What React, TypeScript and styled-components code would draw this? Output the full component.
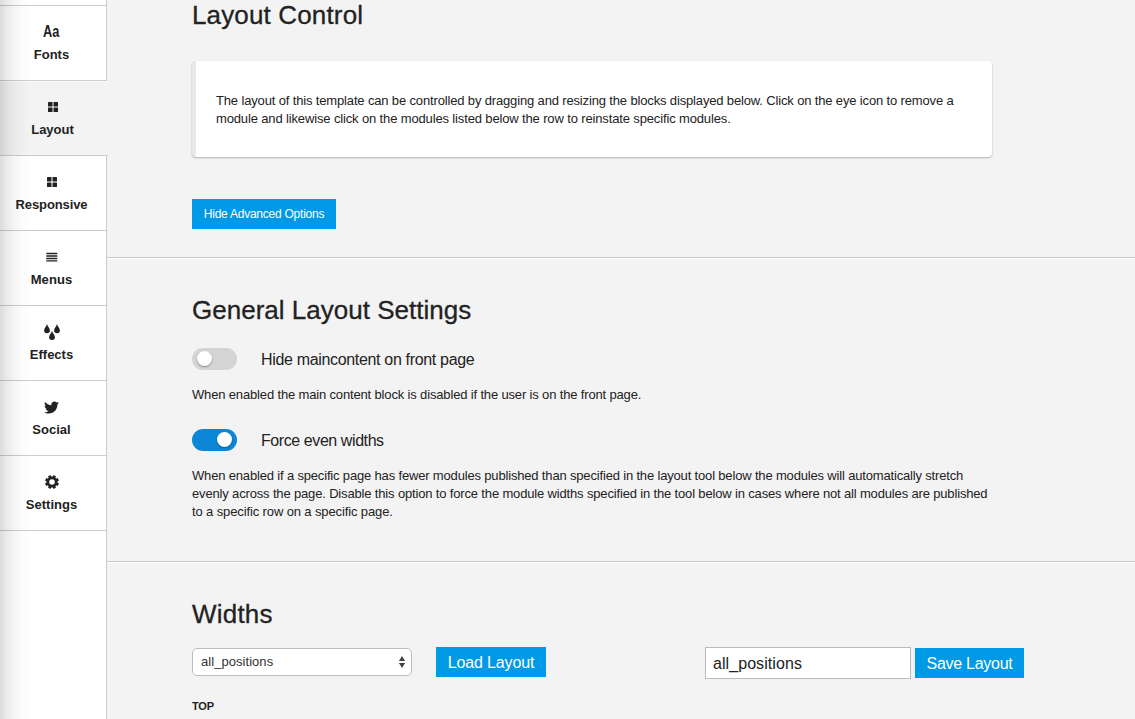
import React from 'react';
import styled, { createGlobalStyle } from 'styled-components';
import { FaTwitter } from 'react-icons/fa';

const GlobalStyle = createGlobalStyle`
  * { box-sizing: border-box; }
  body {
    margin: 0;
    background: #f3f3f3;
    color: #222;
    font: 13px/18px "Liberation Sans", Arial, sans-serif;
    overflow: hidden;
  }
  h2, p { margin: 0; font-weight: normal; }
`;

const Page = styled.div`
  display: flex;
  height: 719px;
  overflow: hidden;
`;

/* Sidebar */

const Sidebar = styled.nav`
  flex: none;
  width: 107px;
  display: flex;
  flex-direction: column;
  position: relative;
  z-index: 1;
  background: #fff;

  &::after {
    content: '';
    position: absolute;
    inset: 0 auto 0 0;
    width: 30px;
    pointer-events: none;
    background: linear-gradient(to right, rgba(0, 0, 0, 0.14), rgba(0, 0, 0, 0.085) 20%, rgba(0, 0, 0, 0.045) 45%, rgba(0, 0, 0, 0.015) 75%, transparent);
  }
`;

const SidebarTop = styled.div`
  height: 6px;
  flex: none;
  border-right: 1px solid #ccc;
  border-bottom: 1px solid #ccc;
`;

const NavItem = styled.a<{ $active?: boolean }>`
  flex: none;
  width: ${p => (p.$active ? 108 : 107)}px;
  height: 75px;
  display: flex;
  flex-direction: column;
  align-items: center;
  padding: 16px 3px 0 0;
  border-right: ${p => (p.$active ? 0 : 1)}px solid #ccc;
  border-bottom: 1px solid #ccc;
  background: ${p => (p.$active ? '#f3f3f3' : '#fff')};
  box-shadow: ${p => (p.$active ? 'inset 0 1px #fbfbfb' : 'none')};
`;

const IconSlot = styled.span`
  width: 20px;
  height: 20px;
  display: flex;
  align-items: center;
  justify-content: center;
`;

const NavLabel = styled.span<{ $spacing?: number }>`
  margin-top: 4px;
  font-weight: bold;
  line-height: 18px;
  letter-spacing: ${p => p.$spacing ?? 0}px;
`;

const FontGlyph = styled.span`
  font: bold 16px/20px "Liberation Sans", Arial, sans-serif;
  transform: scaleX(0.8);
`;

const SidebarRest = styled.div`
  flex: 1;
  border-right: 1px solid #ccc;
`;

/* Content */

const Content = styled.main`
  flex: 1;
  min-width: 0;
`;

const Section = styled.section<{ $height: number; $top: number; $first?: boolean }>`
  height: ${p => p.$height}px;
  padding: ${p => p.$top}px 0 0 85px;
  border-top: ${p => (p.$first ? 0 : 1)}px solid #fff;
  border-bottom: 1px solid #ccc;
`;

const Title = styled.h2<{ $spacing: number }>`
  height: 30px;
  font-size: 26px;
  line-height: 30px;
  letter-spacing: ${p => p.$spacing}px;
  -webkit-text-stroke: 0.3px #222;
`;

const Card = styled.div`
  width: 800px;
  height: 96px;
  margin-top: 31px;
  padding: 31px 20px 29px;
  background: #fff;
  border-left: 4px solid #e8e8e8;
  border-radius: 4px;
  box-shadow: 0 1px 2px rgba(0, 0, 0, 0.28);
`;

const Text = styled.p<{ $spacing?: number }>`
  white-space: nowrap;
  letter-spacing: ${p => p.$spacing ?? -0.155}px;
`;

const Button = styled.button<{ $width: number; $size?: number; $spacing: number; $drop?: number }>`
  display: block;
  width: ${p => p.$width}px;
  height: 30px;
  padding: ${p => p.$drop ?? 0}px 0 0;
  border: 0;
  background: #0099e5;
  color: #fff;
  font: ${p => p.$size ?? 16}px/30px "Liberation Sans", Arial, sans-serif;
  letter-spacing: ${p => p.$spacing}px;
  white-space: nowrap;
`;

const Advanced = styled.div`
  margin-top: 42px;
`;

const Option = styled.div<{ $gap: number }>`
  display: flex;
  align-items: flex-start;
  height: 22px;
  margin: ${p => p.$gap}px 0 16px;
`;

const Switch = styled.span<{ $on?: boolean }>`
  width: 45px;
  height: 22px;
  display: flex;
  justify-content: ${p => (p.$on ? 'flex-end' : 'flex-start')};
  padding: 3px 5px 0;
  border-radius: 11px;
  background: ${p => (p.$on ? '#0c87d8' : '#d4d4d4')};

  &::before {
    content: '';
    width: 15px;
    height: 15px;
    border-radius: 50%;
    background: #fff;
    box-shadow: 0 1px 2px rgba(0, 0, 0, 0.35);
  }
`;

const OptionLabel = styled.span<{ $spacing: number }>`
  margin-left: 24px;
  font-size: 16px;
  line-height: 24px;
  letter-spacing: ${p => p.$spacing}px;
`;

const Toolbar = styled.div`
  display: flex;
  align-items: flex-start;
  height: 32px;
  margin-top: 18px;
`;

const Select = styled.div`
  width: 220px;
  height: 28px;
  margin: 1px 24px 0 0;
  padding: 0 5px 0 8px;
  display: flex;
  align-items: center;
  justify-content: space-between;
  border: 1px solid #bcbcbc;
  border-radius: 5px;
  background: #fff;
  color: #333;
  letter-spacing: 0.05px;
`;

const SaveGroup = styled.div`
  display: flex;
  align-items: center;
  gap: 4px;
  margin-left: 159px;
`;

const NameInput = styled.input`
  width: 206px;
  height: 32px;
  padding: 1px 7px 0;
  border: 1px solid #bcbcbc;
  border-radius: 0;
  outline: 0;
  color: #222;
  font: 16px "Liberation Sans", Arial, sans-serif;
  letter-spacing: 0.07px;
`;

const RowName = styled.div`
  margin-top: 18px;
  font-size: 11px;
  font-weight: bold;
  letter-spacing: -0.2px;
`;

const GridIcon = () => (
  <svg width="10" height="10" viewBox="0 0 10 10" fill="#222">
    <rect width="4.5" height="4.5" rx="0.6" />
    <rect x="5.5" width="4.5" height="4.5" rx="0.6" />
    <rect y="5.5" width="4.5" height="4.5" rx="0.6" />
    <rect x="5.5" y="5.5" width="4.5" height="4.5" rx="0.6" />
  </svg>
);

const MenuIcon = () => (
  <svg width="12" height="10" viewBox="0 0 12 10" fill="#222">
    <path d="M.3 .8h11v1.5H.3zM.3 3.3h11v1.5H.3zM.3 5.8h11v1.5H.3zM.3 8.3h11v1.3H.3z" />
  </svg>
);

const DropsIcon = () => (
  <svg width="16" height="16" viewBox="0 0 16 16" fill="#222">
    <path d="M3 0C3.5 2.3 5.9 4.2 5.9 6.5a2.9 2.7 0 0 1-5.8 0C.1 4.200 2.500 2.300 3 0zM13 0c.5 2.300 2.900 4.200 2.900 6.500a2.900 2.700 0 0 1-5.800 0C10.100 4.200 12.500 2.300 13 0zM8 6.800c.5 2.300 2.900 4.200 2.900 6.500a2.900 2.700 0 0 1-5.800 0C5.100 11 7.500 9.100 8 6.800z" />
  </svg>
);

const GearIcon = () => (
  <svg width="14" height="14" viewBox="-7 -7 14 14" fill="#222">
    {[0, 45, 90, 135].map(a => (
      <rect key={a} x="-1.5" y="-6.9" width="3" height="13.8" rx="0.4" transform={`rotate(${a + 22.5})`} />
    ))}
    <circle r="5.4" />
    <circle r="2.8" fill="#fff" />
  </svg>
);

const navItems: { label: string; icon: React.ReactNode; active?: boolean; spacing?: number }[] = [
  { label: 'Fonts', icon: <FontGlyph>Aa</FontGlyph> },
  { label: 'Layout', icon: <GridIcon />, active: true },
  { label: 'Responsive', icon: <GridIcon />, spacing: -0.1 },
  { label: 'Menus', icon: <MenuIcon />, spacing: 0.1 },
  { label: 'Effects', icon: <DropsIcon /> },
  { label: 'Social', icon: <FaTwitter size={15} color="#222" /> },
  { label: 'Settings', icon: <GearIcon /> },
];

export default function App() {
  return (
    <Page>
      <GlobalStyle />
      <Sidebar>
        <SidebarTop />
        {navItems.map(item => (
          <NavItem key={item.label} $active={item.active}>
            <IconSlot>{item.icon}</IconSlot>
            <NavLabel $spacing={item.spacing}>{item.label}</NavLabel>
          </NavItem>
        ))}
        <SidebarRest />
      </Sidebar>
      <Content>
        <Section $height={258} $top={0} $first>
          <Title $spacing={0.15}>Layout Control</Title>
          <Card>
            <Text $spacing={-0.15}>The layout of this template can be controlled by dragging and resizing the blocks displayed below. Click on the eye icon to remove a</Text>
            <Text $spacing={-0.14}>module and likewise click on the modules listed below the row to reinstate specific modules.</Text>
          </Card>
          <Advanced>
            <Button $width={144} $size={12} $spacing={-0.24}>Hide Advanced Options</Button>
          </Advanced>
        </Section>
        <Section $height={304} $top={36}>
          <Title $spacing={0.01}>General Layout Settings</Title>
          <Option $gap={23}>
            <Switch />
            <OptionLabel $spacing={-0.33}>Hide maincontent on front page</OptionLabel>
          </Option>
          <Text>When enabled the main content block is disabled if the user is on the front page.</Text>
          <Option $gap={25}>
            <Switch $on />
            <OptionLabel $spacing={-0.42}>Force even widths</OptionLabel>
          </Option>
          <Text $spacing={-0.167}>When enabled if a specific page has fewer modules published than specified in the layout tool below the modules will automatically stretch</Text>
          <Text $spacing={-0.158}>evenly across the page. Disable this option to force the module widths specified in the tool below in cases where not all modules are published</Text>
          <Text $spacing={-0.12}>to a specific row on a specific page.</Text>
        </Section>
        <Section $height={200} $top={36}>
          <Title $spacing={0.2}>Widths</Title>
          <Toolbar>
            <Select>
              all_positions
              <svg width="8" height="12" viewBox="0 0 8 12" fill="#444">
                <path d="M4 0l3.1 5H.9zM4 12L.9 7h6.2z" />
              </svg>
            </Select>
            <Button $width={110} $spacing={-0.15} $drop={1}>Load Layout</Button>
            <SaveGroup>
              <NameInput defaultValue="all_positions" />
              <Button $width={109} $spacing={-0.28} $drop={1}>Save Layout</Button>
            </SaveGroup>
          </Toolbar>
          <RowName>TOP</RowName>
        </Section>
      </Content>
    </Page>
  );
}
